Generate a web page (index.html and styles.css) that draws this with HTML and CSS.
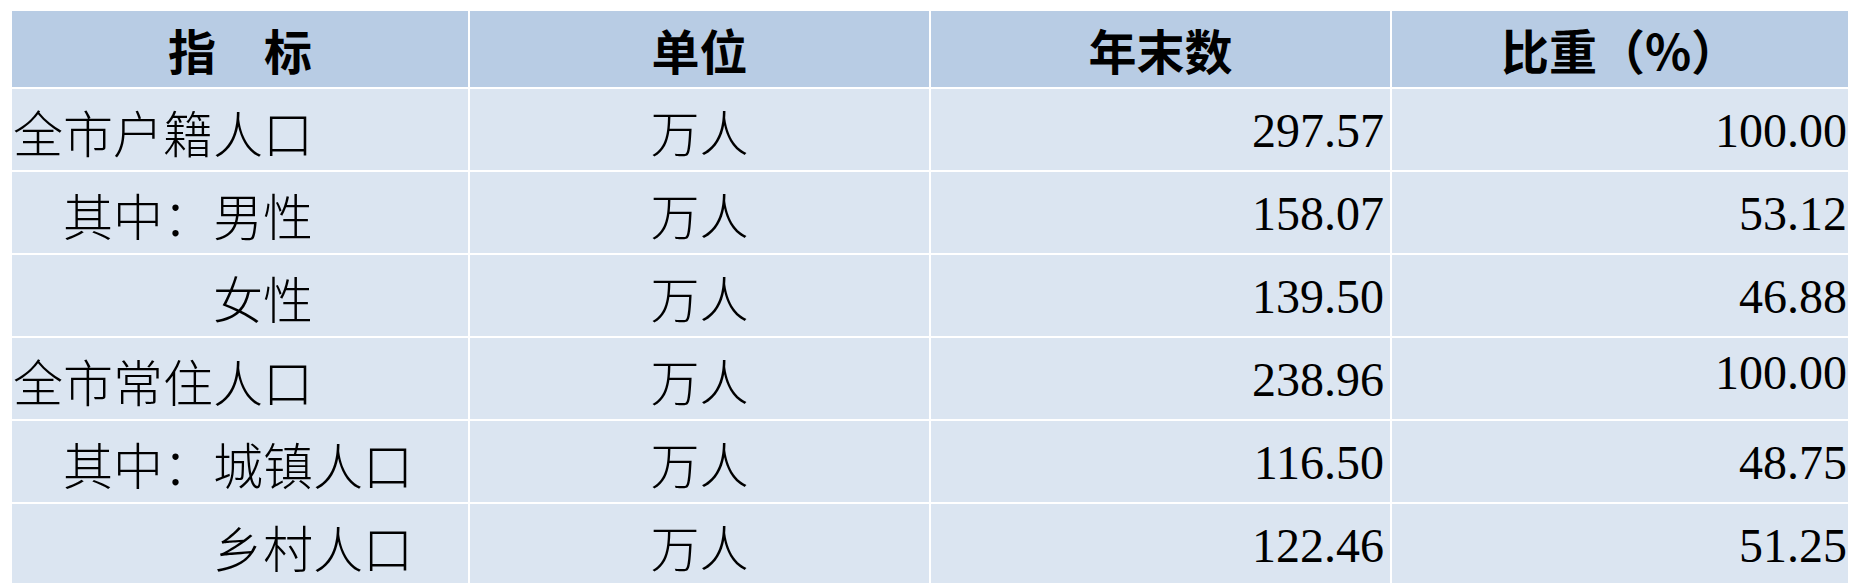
FILE: index.html
```html
<!DOCTYPE html>
<html lang="zh-CN">
<head>
<meta charset="utf-8">
<title>人口统计</title>
<link rel="stylesheet" href="styles.css">
</head>
<body>
<div class="table">
  <div class="cell head">指　标</div>
  <div class="cell head">单位</div>
  <div class="cell head">年末数</div>
  <div class="cell head">比重（%）</div>

  <div class="cell name">全市户籍人口</div>
  <div class="cell unit">万人</div>
  <div class="cell num">297.57</div>
  <div class="cell num last">100.00</div>

  <div class="cell name">　其中：男性</div>
  <div class="cell unit">万人</div>
  <div class="cell num">158.07</div>
  <div class="cell num last">53.12</div>

  <div class="cell name">　　　　女性</div>
  <div class="cell unit">万人</div>
  <div class="cell num">139.50</div>
  <div class="cell num last">46.88</div>

  <div class="cell name">全市常住人口</div>
  <div class="cell unit">万人</div>
  <div class="cell num">238.96</div>
  <div class="cell num last raised">100.00</div>

  <div class="cell name">　其中：城镇人口</div>
  <div class="cell unit">万人</div>
  <div class="cell num">116.50</div>
  <div class="cell num last">48.75</div>

  <div class="cell name">　　　　乡村人口</div>
  <div class="cell unit">万人</div>
  <div class="cell num">122.46</div>
  <div class="cell num last">51.25</div>
</div>
</body>
</html>
```

FILE: styles.css
```css
html, body {
  margin: 0;
  padding: 0;
  background: #ffffff;
  overflow: hidden;
}

body {
  padding: 11px 0 0 12px;
  font-family: "Liberation Serif", "Noto Sans CJK SC", serif;
  color: #000000;
}

.table {
  display: grid;
  grid-template-columns: 456px 459px 459px 456px;
  grid-template-rows: 76px repeat(6, 81px);
  gap: 2px;
  width: 1836px;
  background: #ffffff;
}

.cell {
  display: flex;
  align-items: center;
  font-size: 48px;
  line-height: 1;
  background: #dbe5f1;
  white-space: pre;
  overflow: visible;
}

.head {
  background: #b8cce4;
  justify-content: center;
  font-weight: bold;
  font-family: "Noto Sans CJK SC", serif;
  font-size: 48px;
}

.name {
  justify-content: flex-start;
  padding-left: 1px;
  padding-top: 2px;
  font-family: "Noto Sans CJK SC", serif;
  font-weight: 300;
  font-size: 50px;
}

.unit {
  justify-content: center;
  padding-top: 2px;
  font-family: "Noto Sans CJK SC", serif;
  font-weight: 300;
  font-size: 49px;
}

.num {
  justify-content: flex-end;
  padding-right: 6px;
  padding-top: 2px;
}

.num.last {
  padding-right: 1px;
}

.num.raised {
  padding-top: 0;
  padding-bottom: 12px;
}
```
